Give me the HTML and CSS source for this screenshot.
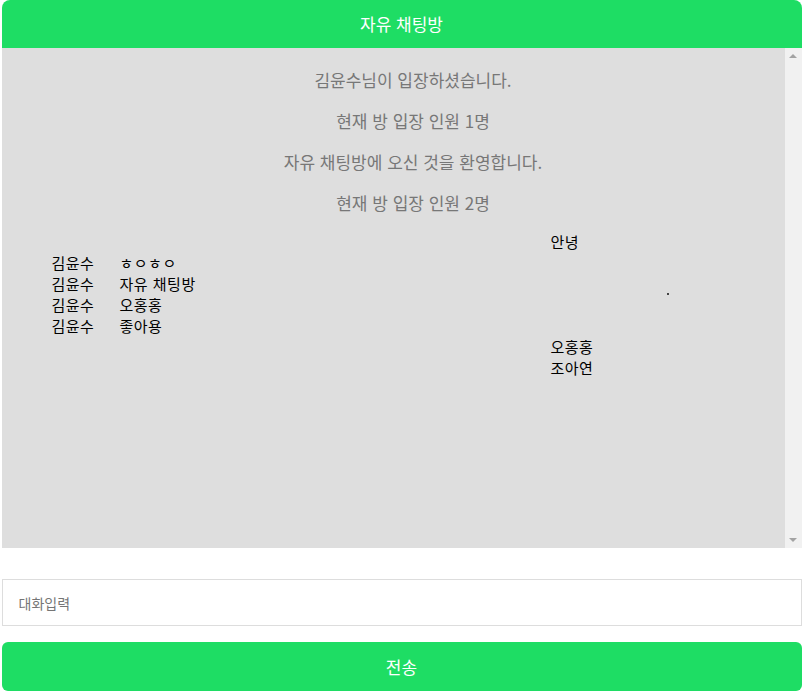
FILE: index.html
```html
<!DOCTYPE html>
<html lang="ko">
<head>
<meta charset="utf-8">
<title>자유 채팅방</title>
<link rel="stylesheet" href="styles.css">
</head>
<body>
<div class="wrap">
  <header class="head">자유 채팅방</header>
  <div class="chat">
    <div class="log">
      <p class="sys">김윤수님이 입장하셨습니다.</p>
      <p class="sys">현재 방 입장 인원 1명</p>
      <p class="sys">자유 채팅방에 오신 것을 환영합니다.</p>
      <p class="sys">현재 방 입장 인원 2명</p>
      <div class="list">
        <div class="row mine">안녕</div>
        <div class="row other"><span class="name">김윤수</span><span>ㅎㅇㅎㅇ</span></div>
        <div class="row other"><span class="name">김윤수</span><span>자유 채팅방</span><span class="dot"></span></div>
        <div class="row other"><span class="name">김윤수</span><span>오홍홍</span></div>
        <div class="row other"><span class="name">김윤수</span><span>좋아용</span></div>
        <div class="row mine">오홍홍</div>
        <div class="row mine">조아연</div>
      </div>
    </div>
    <div class="bar">
      <span class="arrow up"></span>
      <span class="arrow down"></span>
    </div>
  </div>
  <input class="field" type="text" placeholder="대화입력" autofocus>
  <button class="send" type="button">전송</button>
</div>
</body>
</html>
```
FILE: styles.css
```css
html, body {
  margin: 0;
  padding: 0;
  background: #fff;
}
body {
  font-family: "Noto Sans CJK KR", "Noto Sans", sans-serif;
}
.wrap {
  width: 800px;
  margin: 0 auto;
  display: flex;
  flex-direction: column;
}
.head {
  height: 48px;
  line-height: 48px;
  background: #1edd64;
  color: #fff;
  font-size: 17px;
  text-align: center;
  border-radius: 8px 8px 0 0;
}
.chat {
  height: 500px;
  display: flex;
  background: #dedede;
}
.log {
  flex: 1;
  padding: 3px 0 0 40px;
}
.sys {
  margin: 16px 0;
  line-height: 25px;
  font-size: 17px;
  color: #777;
  text-align: center;
}
.list {
  margin-top: 5px;
  display: flex;
  flex-direction: column;
}
.row {
  display: flex;
  line-height: 21px;
  font-size: 15px;
  letter-spacing: 0.5px;
  color: #000;
}
.mine {
  padding-left: 509px;
}
.other {
  padding-left: 10px;
}
.name {
  flex: 0 0 68px;
}
.dot {
  width: 2px;
  height: 2px;
  background: #111;
  border-radius: 1px;
  margin-left: auto;
  margin-right: 116px;
  align-self: flex-end;
  margin-bottom: -1px;
}
.bar {
  width: 17px;
  background: #f1f1f1;
  display: flex;
  flex-direction: column;
  justify-content: space-between;
  align-items: center;
  padding: 6px 0;
}
.arrow {
  width: 0;
  height: 0;
  border-left: 4px solid transparent;
  border-right: 4px solid transparent;
}
.up {
  border-bottom: 4px solid #a3a3a3;
}
.down {
  border-top: 4px solid #a3a3a3;
}
.field {
  margin-top: 31px;
  height: 47px;
  box-sizing: border-box;
  border: 1px solid #ddd;
  padding: 0 16px;
  font-family: "Noto Sans CJK KR", "Noto Sans", sans-serif;
  font-size: 14px;
  outline: none;
  background: #fff;
}
.field::placeholder {
  color: #757575;
}
.send {
  margin-top: 16px;
  height: 49px;
  border: none;
  border-radius: 6px;
  background: #1edd64;
  color: #fff;
  font-family: "Noto Sans CJK KR", "Noto Sans", sans-serif;
  font-size: 17px;
}
```
